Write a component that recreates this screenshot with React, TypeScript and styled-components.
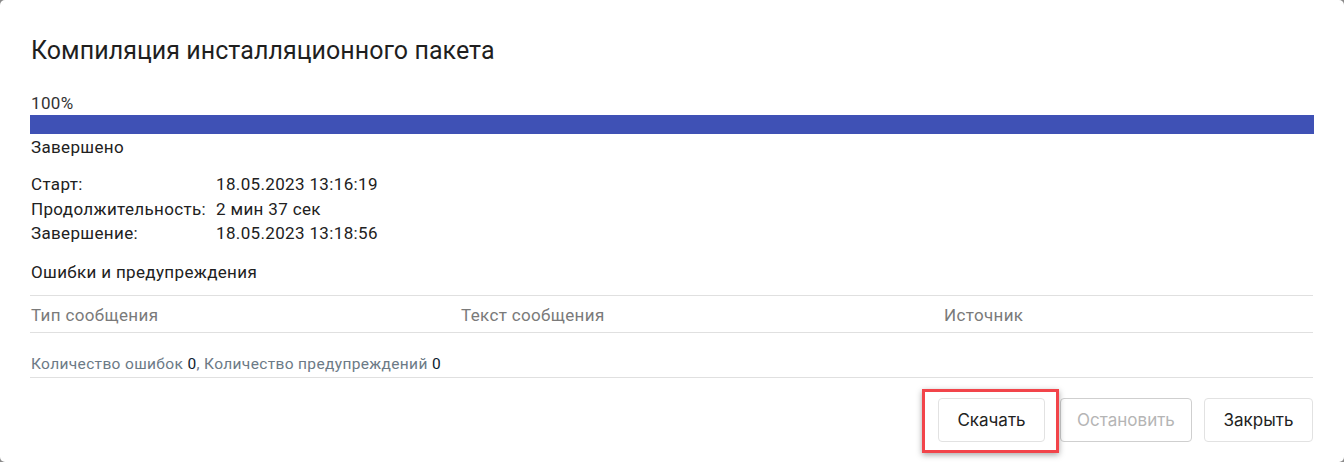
import React from "react";
import styled, { createGlobalStyle } from "styled-components";

const Global = createGlobalStyle`
  html, body { margin: 0; padding: 0; background: #8a8a8a; }
  body { font-family: Roboto, "Noto Sans", sans-serif; }
  * { box-sizing: border-box; }
`;

const Dialog = styled.div`
  position: relative;
  width: 1344px;
  height: 462px;
  background: #fff;
  border-radius: 5px;
  padding: 37px 31px 0 30px;
  display: flex;
  flex-direction: column;
  color: #212121;
  letter-spacing: 0.35px;
`;

const Title = styled.h2`
  margin: 0 0 0 1px;
  font-size: 25px;
  font-weight: 400;
  line-height: 28px;
  letter-spacing: 0.05px;
  color: #1f1f1f;
`;

const Percent = styled.div`
  margin-top: 28px;
  font-size: 17px;
  line-height: 20px;
  color: #333;
  padding-left: 1px;
`;

const Bar = styled.div`
  margin-top: 2px;
  margin-right: -1px;
  height: 19px;
  background: #3f51b5;
`;

const Status = styled.div`
  font-size: 17px;
  line-height: 24px;
  margin-top: 1px;
  color: #212121;
  padding-left: 1px;
`;

const InfoGrid = styled.div`
  display: grid;
  grid-template-columns: 185px auto;
  margin-top: 13px;
  font-size: 17px;
  line-height: 24.5px;
  color: #212121;
  padding-left: 1px;
`;

const SectionTitle = styled.div`
  margin-top: 15px;
  font-size: 17px;
  line-height: 22px;
  color: #212121;
  padding-left: 1px;
`;

const TableHead = styled.div`
  margin-top: 12px;
  display: grid;
  grid-template-columns: 430px 483px 1fr;
  border-top: 1px solid #e0e0e0;
  border-bottom: 1px solid #e0e0e0;
  height: 38px;
  padding-top: 2px;
  align-items: center;
  font-size: 17px;
  color: #7a7a7a;
  padding-left: 1px;
`;

const Summary = styled.div`
  margin-top: 20px;
  font-size: 15.5px;
  line-height: 22px;
  color: #6c7a86;
  border-bottom: 1px solid #e0e0e0;
  padding-bottom: 2px;
  padding-left: 1px;
  letter-spacing: 0.35px;
`;

const Num = styled.span`
  color: #0b1b2e;
`;

const Footer = styled.div`
  display: flex;
  justify-content: flex-end;
  gap: 12px;
  margin-top: 20px;
`;

const Button = styled.button<{ $disabled?: boolean; $width: number; $gapAfter?: number }>`
  height: 44px;
  width: ${(p) => p.$width}px;
  margin-right: ${(p) => p.$gapAfter ?? 0}px;
  padding: 0;
  border: 1px solid ${(p) => (p.$disabled ? "#cfcfcf" : "#e2e2e2")};
  border-radius: 4px;
  background: #fff;
  font-family: Inter, Roboto, sans-serif;
  font-size: 17px;
  letter-spacing: 0;
  color: ${(p) => (p.$disabled ? "#b5b5b5" : "#222")};
`;

const Highlight = styled.div`
  position: absolute;
  left: 922px;
  top: 389px;
  width: 137px;
  height: 64px;
  border: 3px solid #f2444a;
  box-shadow: 0 2px 6px rgba(0, 0, 0, 0.35);
  pointer-events: none;
`;

export default function App() {
  return (
    <>
      <Global />
      <Dialog>
        <Title>Компиляция инсталляционного пакета</Title>
        <Percent>100%</Percent>
        <Bar />
        <Status>Завершено</Status>
        <InfoGrid>
          <span>Старт:</span>
          <span>18.05.2023 13:16:19</span>
          <span>Продолжительность:</span>
          <span>2 мин 37 сек</span>
          <span>Завершение:</span>
          <span>18.05.2023 13:18:56</span>
        </InfoGrid>
        <SectionTitle>Ошибки и предупреждения</SectionTitle>
        <TableHead>
          <span>Тип сообщения</span>
          <span>Текст сообщения</span>
          <span>Источник</span>
        </TableHead>
        <Summary>
          Количество ошибок <Num>0</Num>, Количество предупреждений <Num>0</Num>
        </Summary>
        <Footer>
          <Button $width={107} $gapAfter={3}>
            Скачать
          </Button>
          <Button $width={132} $disabled disabled>
            Остановить
          </Button>
          <Button $width={109}>Закрыть</Button>
        </Footer>
        <Highlight />
      </Dialog>
    </>
  );
}
